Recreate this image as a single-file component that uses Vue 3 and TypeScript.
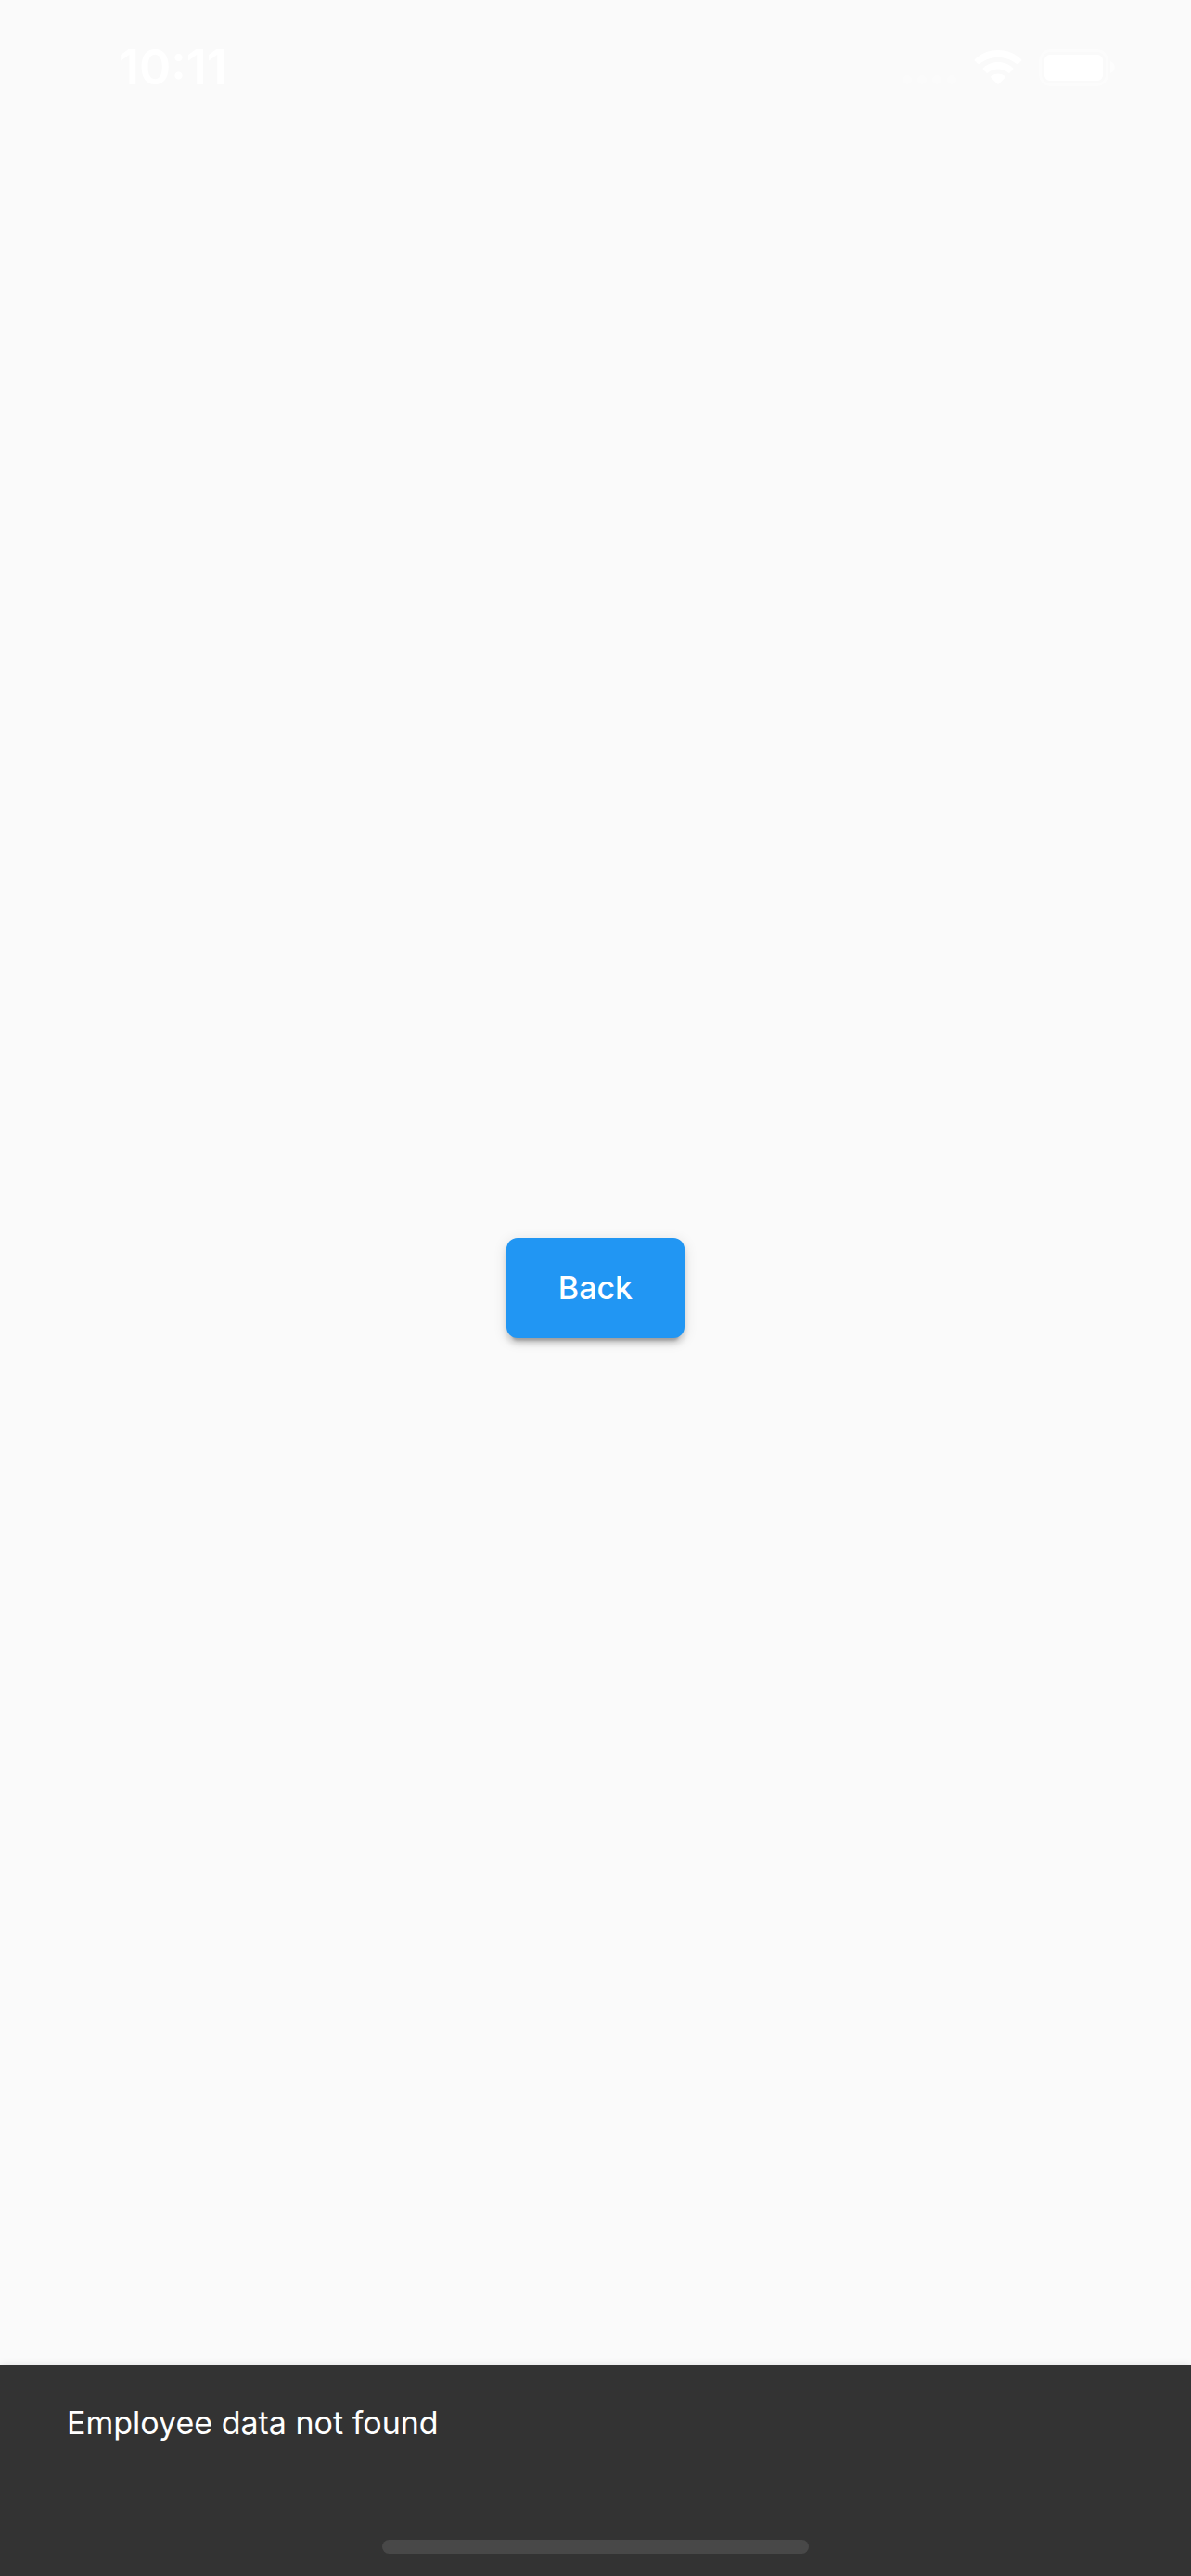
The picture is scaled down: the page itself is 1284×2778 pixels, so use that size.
<script setup lang="ts">
import { ref } from 'vue'

const time = ref<string>('10:11')
const message = ref<string>('Employee data not found')

function goBack(): void {
  window.history.back()
}
</script>

<template>
  <div class="screen">
    <header class="status">
      <time class="clock">{{ time }}</time>
      <div class="indicators">
        <svg class="signal" viewBox="0 0 60 38" aria-hidden="true">
          <circle cx="6" cy="32" r="5" />
          <circle cx="22" cy="32" r="5" />
          <circle cx="38" cy="32" r="5" />
          <circle cx="54" cy="32" r="5" />
        </svg>
        <svg class="wifi" viewBox="0 0 52 38" aria-hidden="true">
          <path d="M26 0C36 0 45 4 51.200 10.200q.6.7 0 1.400l-3.400 3.400q-.8.7-1.600 0C40.500 10.500 33.500 8 26 8S11.500 10.500 5.800 15q-.8.7-1.600 0L.8 11.600q-.6-.7 0-1.400C7 4 16 0 26 0Z" />
          <path d="M26 13c6.500 0 12 2.500 16.200 6.200q.8.8 0 1.600l-3.600 3.600q-.8.700-1.600 0C34 22 30.200 20.600 26 20.600S18 22 15 24.400q-.8.7-1.600 0L9.800 20.800q-.8-.8 0-1.600C14 15.500 19.500 13 26 13Z" />
          <path d="M26 25.500c3 0 5.500 1 7.500 2.600q.8.800 0 1.600l-6.700 6.800q-.8.700-1.600 0l-6.700-6.800q-.8-.8 0-1.600c2-1.600 4.500-2.600 7.500-2.600Z" />
        </svg>
        <svg class="battery" viewBox="0 0 82 40" aria-hidden="true">
          <rect class="shell" x="1.500" y="1.500" width="72" height="37" rx="11" />
          <rect x="6" y="6" width="63" height="28" rx="6" />
          <path class="shell-tip" d="M77 13c3 1 5 3.500 5 6.500s-2 5.500-5 6.500Z" />
        </svg>
      </div>
    </header>

    <main class="content">
      <button class="back" type="button" @click="goBack">Back</button>
    </main>

    <footer class="snackbar">
      <p class="message" role="status">{{ message }}</p>
      <div class="home-indicator"></div>
    </footer>
  </div>
</template>

<style>
body {
  margin: 0;
  background: #fafafa;
}
</style>

<style scoped>
.screen {
  display: grid;
  grid-template: minmax(100vh, auto) / minmax(0, 1fr);
  background: #fafafa;
  color: #ffffff;
  font-family: Inter, "Liberation Sans", sans-serif;
}

/* The three layers share one cell, so the button centres on the full screen. */
.status,
.content,
.snackbar {
  grid-area: 1 / 1;
}

.status {
  align-self: start;
  display: flex;
  align-items: center;
  justify-content: space-between;
  box-sizing: border-box;
  height: 146px;
  padding: 0 82px 0 128px;
}

.clock {
  font-size: 52px;
  font-weight: 600;
  line-height: 60px;
}

.indicators {
  display: flex;
  align-items: center;
  gap: 18px;
}

.signal {
  width: 60px;
  height: 38px;
  fill: #ffffff;
  opacity: 0.3;
}

.wifi {
  width: 52px;
  height: 38px;
  fill: #ffffff;
}

.battery {
  width: 82px;
  height: 40px;
  fill: #ffffff;
}

.battery .shell {
  fill: none;
  stroke: #ffffff;
  stroke-width: 3;
  opacity: 0.4;
}

.battery .shell-tip {
  opacity: 0.5;
}

.content {
  place-self: center;
}

.back {
  display: block;
  min-width: 192px;
  height: 108px;
  padding: 0 48px;
  border: 0;
  border-radius: 12px;
  background: #2196f3;
  box-shadow:
    0 9px 3px -6px rgba(0, 0, 0, 0.2),
    0 6px 6px 0 rgba(0, 0, 0, 0.14),
    0 3px 15px 0 rgba(0, 0, 0, 0.12);
  color: #ffffff;
  font: 500 34px/48px Inter, "Liberation Sans", sans-serif;
  cursor: pointer;
}

.snackbar {
  align-self: end;
  display: flex;
  flex-direction: column;
  justify-content: space-between;
  box-sizing: border-box;
  min-height: 228px;
  padding: 39px 72px 24px;
  background: #333333;
  box-shadow: 0 0 8px rgba(0, 0, 0, 0.1);
}

.message {
  margin: 0;
  font-size: 34px;
  line-height: 48px;
}

.home-indicator {
  align-self: center;
  width: 460px;
  max-width: 100%;
  height: 15px;
  border-radius: 8px;
  background: #484848;
}
</style>
